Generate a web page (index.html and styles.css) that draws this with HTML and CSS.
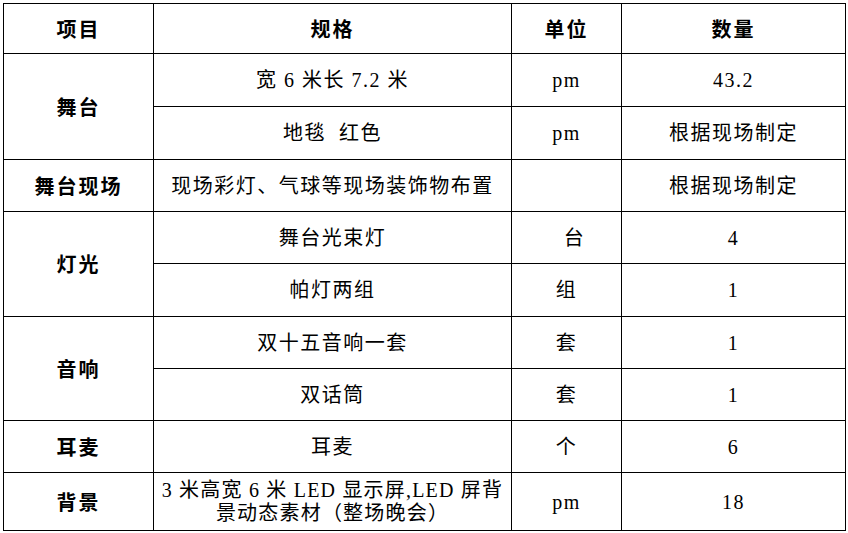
FILE: index.html
```html
<!DOCTYPE html>
<html lang="zh">
<head>
<meta charset="utf-8">
<title>舞台物料清单</title>
<link rel="stylesheet" href="styles.css">
</head>
<body>
<table class="sheet">
  <colgroup>
    <col class="c1"><col class="c2"><col class="c3"><col class="c4">
  </colgroup>
  <tr class="r-head">
    <th>项目</th><th>规格</th><th>单位</th><th>数量</th>
  </tr>
  <tr class="r-a">
    <th rowspan="2">舞台</th><td>宽 6 米长 7.2 米</td><td>pm</td><td>43.2</td>
  </tr>
  <tr class="r-a">
    <td>地毯&nbsp;&nbsp;红色</td><td>pm</td><td>根据现场制定</td>
  </tr>
  <tr class="r-b">
    <th>舞台现场</th><td>现场彩灯、气球等现场装饰物布置</td><td></td><td>根据现场制定</td>
  </tr>
  <tr class="r-b">
    <th rowspan="2">灯光</th><td>舞台光束灯</td><td class="shift">台</td><td>4</td>
  </tr>
  <tr class="r-a">
    <td>帕灯两组</td><td>组</td><td>1</td>
  </tr>
  <tr class="r-b">
    <th rowspan="2">音响</th><td>双十五音响一套</td><td>套</td><td>1</td>
  </tr>
  <tr class="r-b">
    <td>双话筒</td><td>套</td><td>1</td>
  </tr>
  <tr class="r-b">
    <th>耳麦</th><td>耳麦</td><td>个</td><td>6</td>
  </tr>
  <tr class="r-last">
    <th>背景</th><td class="two">3 米高宽 6 米 LED 显示屏,LED 屏背<br>景动态素材（整场晚会）</td><td>pm</td><td>18</td>
  </tr>
</table>
</body>
</html>
```
FILE: styles.css
```css
html, body {
  margin: 0;
  padding: 0;
  background: #fff;
}
body {
  padding: 3px 0 0 3px;
}
.sheet {
  border-collapse: collapse;
  width: 842px;
  table-layout: fixed;
  font-family: "Liberation Serif", "Noto Sans CJK SC", serif;
  font-size: 20px;
  color: #000;
}
.c1 { width: 150px; }
.c2 { width: 358px; }
.c3 { width: 110px; }
.c4 { width: 224px; }
.sheet th, .sheet td {
  border: 1px solid #000;
  padding: 0;
  text-align: center;
  vertical-align: middle;
  line-height: 20px;
  letter-spacing: 1.5px;
}
.sheet th {
  font-family: "Noto Sans CJK SC", sans-serif;
  font-weight: 700;
  letter-spacing: 2px;
}
.sheet td {
  font-weight: 400;
}
.r-head { height: 50px; }
.r-a { height: 53px; }
.r-b { height: 52px; }
.r-last { height: 58px; }
.sheet td.shift { padding-left: 16px; }
.sheet td.two { line-height: 23px; letter-spacing: 1.2px; }
```
